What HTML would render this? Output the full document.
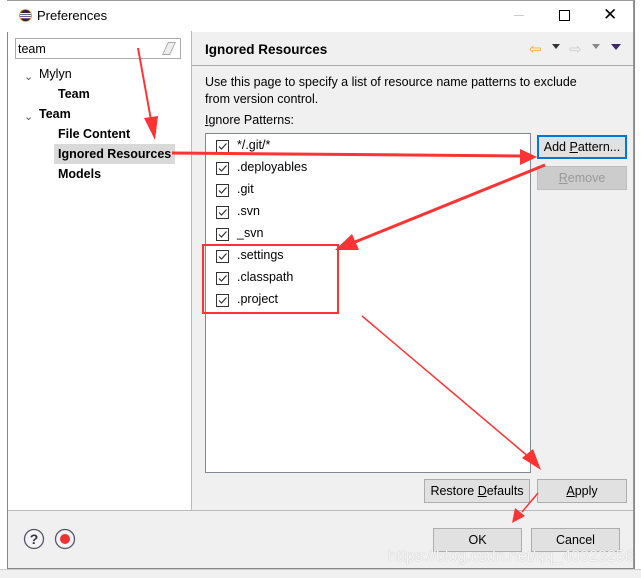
<!DOCTYPE html>
<html><head><style>
body{margin:0;width:641px;height:577px;overflow:hidden;background:#fff;font-family:"Liberation Sans",sans-serif;font-size:12px;color:#000;position:relative}
.a{position:absolute}
.btn{position:absolute;background:#e1e1e1;border:1px solid #adadad;box-sizing:border-box;text-align:center;font-size:12.5px;line-height:22px}
.cb{position:absolute;left:216px;width:11px;height:11px;border:1px solid #333;background:#fff}
.cb svg{position:absolute;left:0;top:0}
.it{position:absolute;left:237px;font-size:12.5px}
.tr{position:absolute;font-size:12.5px}
</style></head><body>
<div class="a" style="left:7px;top:0;width:626px;height:568px;border:1px solid #888;border-top:none;background:#f0f0f0"></div>
<div class="a" style="left:7px;top:0;width:627px;height:31px;background:#fff;border-top:1px solid #999"></div>
<div class="a" style="left:633px;top:0;width:1px;height:569px;background:#999"></div>
<div class="a" style="left:7px;top:568px;width:627px;height:1px;background:#888"></div>
<div class="a" style="left:0;top:569px;width:641px;height:8px;background:#f0f0f0;border-top:1px solid #ccc"></div>
<svg class="a" style="left:19px;top:9px" width="13" height="13"><circle cx="6.5" cy="6.5" r="6" fill="#2c2255"/><rect x="1" y="4" width="11" height="1.3" fill="#fff"/><rect x="1" y="6" width="11" height="1.3" fill="#fff"/><rect x="1" y="8" width="11" height="1.3" fill="#fff"/><circle cx="6.5" cy="6.5" r="6" fill="none" stroke="#f7941e" stroke-width="0.8"/></svg>
<div class="a" style="left:37px;top:8px;font-size:13px">Preferences</div>
<div class="a" style="left:514px;top:15px;width:10px;height:1px;background:#ccc"></div>
<div class="a" style="left:559px;top:10px;width:9px;height:9px;border:1px solid #000"></div>
<div class="a" style="left:603px;top:5px;font-size:17px;font-weight:300">✕</div>
<div class="a" style="left:8px;top:31px;width:183px;height:480px;background:#fff;border-right:1px solid #bbb"></div>
<div class="a" style="left:15px;top:38px;width:164px;height:19px;border:1px solid #aaa;background:#fff"></div>
<div class="a" style="left:18px;top:42px;font-size:12.5px">team</div>
<div class="a" style="left:165px;top:42px;width:6px;height:11px;border:1px solid #aaa;transform:skewX(-25deg);background:#eee"></div>
<div class="a" style="left:24px;top:70px;font-size:11px;color:#555">⌄</div>
<div class="tr" style="left:39px;top:67px">Mylyn</div>
<div class="tr" style="left:58px;top:87px;font-weight:bold">Team</div>
<div class="a" style="left:24px;top:110px;font-size:11px;color:#555">⌄</div>
<div class="tr" style="left:39px;top:107px;font-weight:bold">Team</div>
<div class="tr" style="left:58px;top:127px;font-weight:bold">File Content</div>
<div class="a" style="left:54px;top:144px;width:121px;height:20px;background:#d9d9d9"></div>
<div class="tr" style="left:58px;top:147px;font-weight:bold">Ignored Resources</div>
<div class="tr" style="left:58px;top:167px;font-weight:bold">Models</div>
<div class="a" style="left:192px;top:65px;width:441px;height:1px;background:#aaa"></div>
<div class="a" style="left:205px;top:42px;font-size:13.5px;font-weight:bold">Ignored Resources</div>
<div class="a" style="left:529px;top:40px;font-size:15px;color:#e8a53a">⇦</div>
<div class="a" style="left:552px;top:44px;width:0;height:0;border:4px solid transparent;border-top:5px solid #333"></div>
<div class="a" style="left:569px;top:40px;font-size:15px;color:#ccc">⇨</div>
<div class="a" style="left:592px;top:44px;width:0;height:0;border:4px solid transparent;border-top:5px solid #888"></div>
<div class="a" style="left:611px;top:44px;width:0;height:0;border:5px solid transparent;border-top:6px solid #3a2a6a"></div>
<div class="a" style="left:205px;top:74px;font-size:12.5px;line-height:17px">Use this page to specify a list of resource name patterns to exclude<br>from version control.</div>
<div class="a" style="left:205px;top:113px;font-size:12.5px"><u>I</u>gnore Patterns:</div>
<div class="a" style="left:205px;top:133px;width:324px;height:338px;background:#fff;border:1px solid #828790"></div>
<div class="cb" style="top:140px"><svg width="11" height="11"><path d="M2 5.5 L4.5 8 L9.5 2.5" stroke="#333" fill="none" stroke-width="1.2"/></svg></div><div class="it" style="top:138px">*/.git/*</div>
<div class="cb" style="top:162px"><svg width="11" height="11"><path d="M2 5.5 L4.5 8 L9.5 2.5" stroke="#333" fill="none" stroke-width="1.2"/></svg></div><div class="it" style="top:160px">.deployables</div>
<div class="cb" style="top:184px"><svg width="11" height="11"><path d="M2 5.5 L4.5 8 L9.5 2.5" stroke="#333" fill="none" stroke-width="1.2"/></svg></div><div class="it" style="top:182px">.git</div>
<div class="cb" style="top:206px"><svg width="11" height="11"><path d="M2 5.5 L4.5 8 L9.5 2.5" stroke="#333" fill="none" stroke-width="1.2"/></svg></div><div class="it" style="top:204px">.svn</div>
<div class="cb" style="top:228px"><svg width="11" height="11"><path d="M2 5.5 L4.5 8 L9.5 2.5" stroke="#333" fill="none" stroke-width="1.2"/></svg></div><div class="it" style="top:226px">_svn</div>
<div class="cb" style="top:250px"><svg width="11" height="11"><path d="M2 5.5 L4.5 8 L9.5 2.5" stroke="#333" fill="none" stroke-width="1.2"/></svg></div><div class="it" style="top:248px">.settings</div>
<div class="cb" style="top:272px"><svg width="11" height="11"><path d="M2 5.5 L4.5 8 L9.5 2.5" stroke="#333" fill="none" stroke-width="1.2"/></svg></div><div class="it" style="top:270px">.classpath</div>
<div class="cb" style="top:294px"><svg width="11" height="11"><path d="M2 5.5 L4.5 8 L9.5 2.5" stroke="#333" fill="none" stroke-width="1.2"/></svg></div><div class="it" style="top:292px">.project</div>
<div class="btn" style="left:537px;top:135px;width:90px;height:24px;border:2px solid #0078d7;line-height:20px">Add <u>P</u>attern...</div>
<div class="btn" style="left:537px;top:166px;width:90px;height:24px;color:#999;background:#ccc;border-color:#bfbfbf"><u>R</u>emove</div>
<div class="btn" style="left:424px;top:479px;width:106px;height:24px">Restore <u>D</u>efaults</div>
<div class="btn" style="left:537px;top:479px;width:90px;height:24px"><u>A</u>pply</div>
<div class="a" style="left:8px;top:510px;width:625px;height:1px;background:#bbb"></div>
<div class="btn" style="left:433px;top:528px;width:89px;height:24px">OK</div>
<div class="btn" style="left:531px;top:528px;width:89px;height:24px">Cancel</div>
<svg class="a" style="left:23px;top:528px" width="55" height="22"><circle cx="11" cy="11" r="9.5" fill="#f4f4f8" stroke="#556" stroke-width="1.3"/><text x="11" y="16" font-size="14" font-weight="bold" text-anchor="middle" fill="#334" font-family="Liberation Sans">?</text><circle cx="42" cy="11" r="9.5" fill="#f4f4f8" stroke="#556" stroke-width="1.3"/><circle cx="42" cy="11" r="5" fill="#e33"/></svg>
<div class="a" style="left:388px;top:548px;font-size:16px;color:rgba(255,255,255,0.85);text-shadow:0 0 1px #aaa">https://blog.csdn.net/qq_40323256</div>
<svg class="a" style="left:0;top:0" width="641" height="577">
<g fill="#f33" stroke="#f33">
<rect x="203" y="245" width="135" height="68" fill="none" stroke-width="2"/>
<line x1="138" y1="48" x2="151" y2="120" stroke-width="2"/><polygon points="144,118 158,116 155,140" stroke="none"/>
<line x1="172" y1="153" x2="520" y2="156" stroke-width="3"/><polygon points="520,149 537,157 520,165" stroke="none"/>
<line x1="545" y1="165" x2="355" y2="242" stroke-width="3"/><polygon points="352,234 335,250 359,250" stroke="none"/>
<line x1="362" y1="316" x2="530" y2="458" stroke-width="1.5"/><polygon points="522,458 541,470 533,449" stroke="none"/>
<line x1="538" y1="493" x2="522" y2="512" stroke-width="1.5"/><polygon points="515,508 512,523 525,516" stroke="none"/>
</g></svg>
</body></html>
